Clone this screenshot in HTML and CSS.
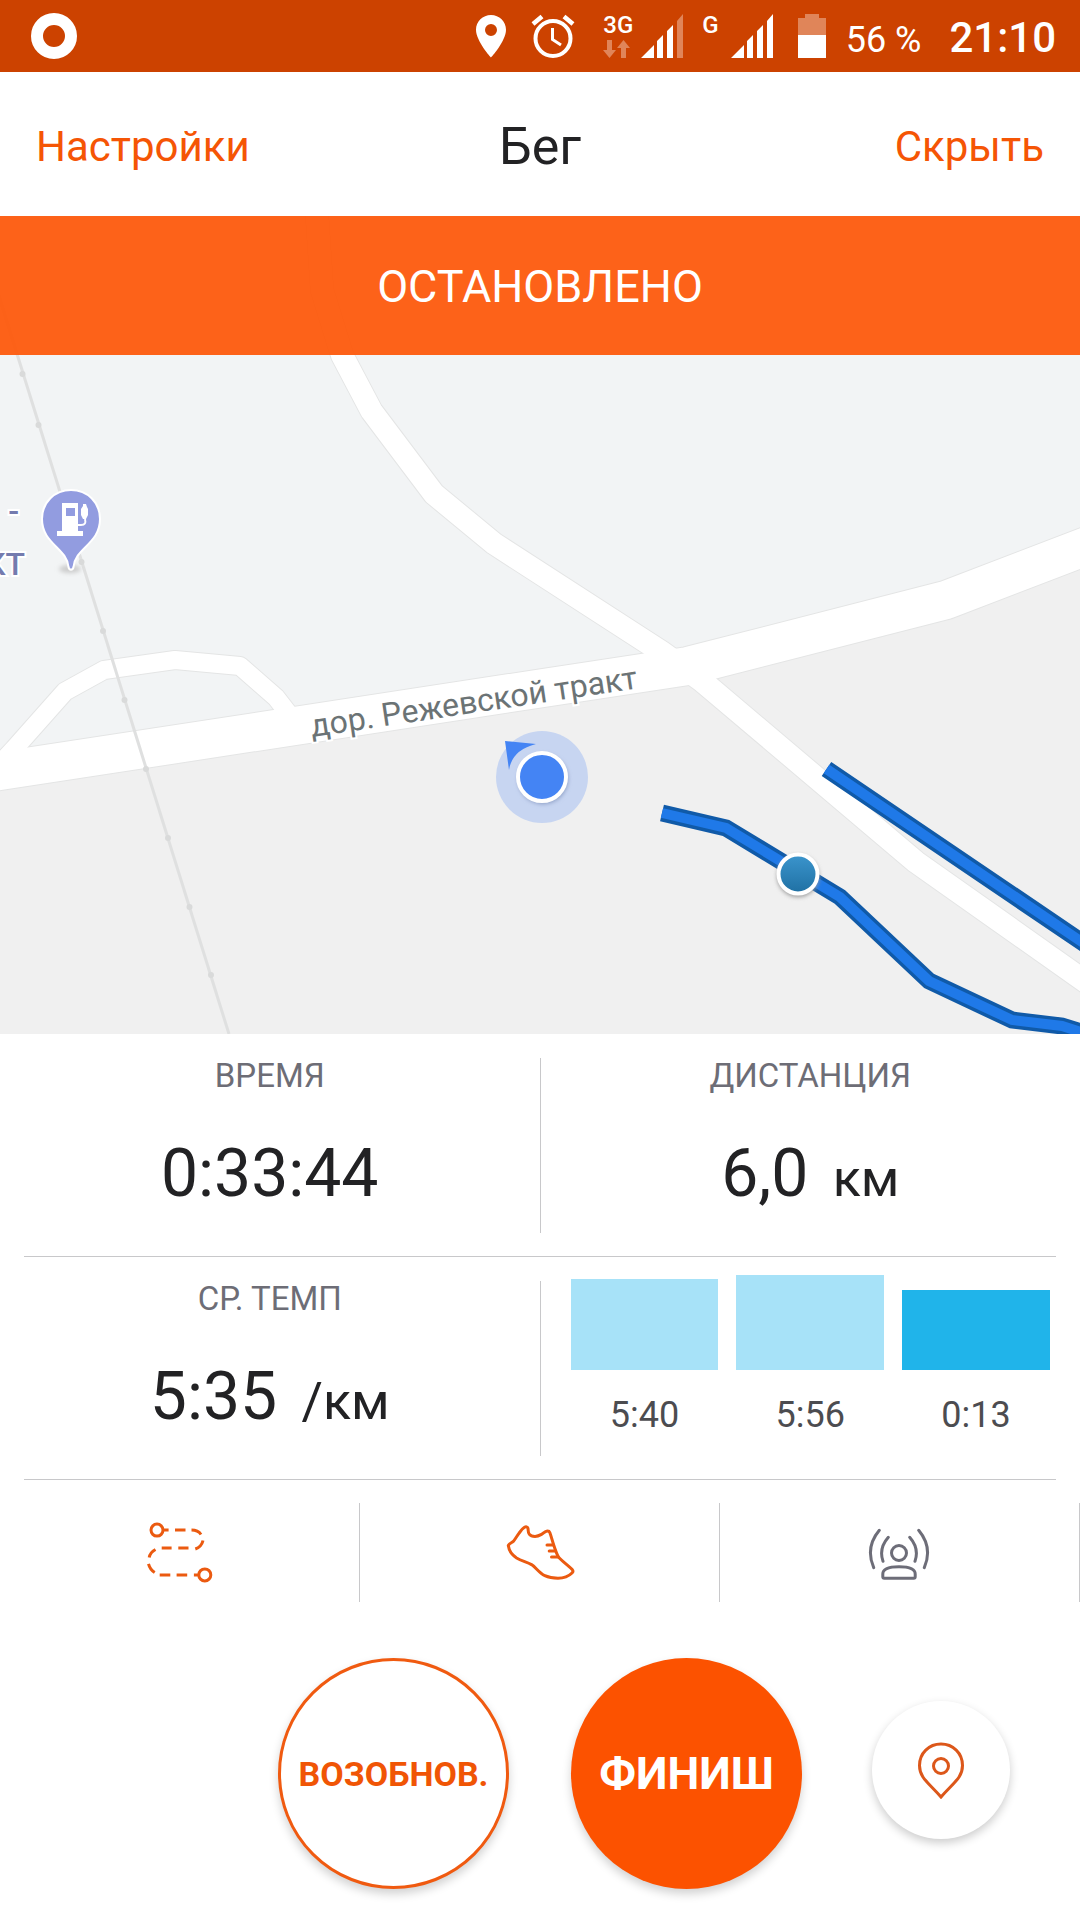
FILE: index.html
```
<!DOCTYPE html>
<html lang="ru">
<head>
    <meta charset="UTF-8">
    <meta name="viewport" content="width=device-width, initial-scale=1.0">
    <title>Бег</title>
    <link rel="stylesheet" href="styles.css">
</head>
<body>
    <div class="status-bar">
        <svg class="status-app" width="46" height="46" viewBox="0 0 46 46"><circle cx="23" cy="23" r="17" fill="none" stroke="#fff" stroke-width="12"/></svg>
        <svg width="32" height="44" viewBox="0 0 32 44"><path fill="#fff" fill-rule="evenodd" d="M16 1C7.700 1 1 7.500 1 15.700 1 27 16 43.500 16 43.500S31 27 31 15.700C31 7.500 24.300 1 16 1Zm0 9a6 6 0 1 1 0 12 6 6 0 0 1 0-12Z"/></svg>
        <svg width="44" height="44" viewBox="0 0 44 44" fill="none" stroke="#fff" stroke-width="4">
            <circle cx="22" cy="24.500" r="17.500"/>
            <path d="M2 10 11 2.500M42 10 33 2.500" stroke-width="4.500"/>
            <path d="M21.500 14V25.500L30 31" stroke-width="3"/>
        </svg>
        <div class="network">
            <div class="sim">
                <div class="sim-type">
                    <span>3G</span>
                    <svg width="28" height="18" viewBox="0 0 28 18" fill="#e08559"><path d="M4 0h5v10h4L6.500 18 0 10h4zM18 18h5V8h4L20.500 0 14 8h4z"/></svg>
                </div>
                <svg width="43" height="44" viewBox="0 0 43 44" fill="#fff">
                    <path d="M0 44 13 31V44zM16 44V27L22 21V44zM26 44V17L32 11V44z"/>
                    <path fill="#e08559" d="M36 44V7L42 0V44z"/>
                </svg>
            </div>
            <div class="sim">
                <div class="sim-type"><span>G</span></div>
                <svg width="43" height="44" viewBox="0 0 43 44" fill="#fff"><path d="M0 44 13 31V44zM16 44V27L22 21V44zM26 44V17L32 11V44zM36 44V7L42 0V44z"/></svg>
            </div>
        </div>
        <svg width="28" height="44" viewBox="0 0 28 44"><path fill="#e08559" d="M0 4h7V0h14v4h7v17H0z"/><path fill="#fff" d="M0 21h28v23H0z"/></svg>
        <div class="status-text">
            <span class="battery-level">56 %</span>
            <span class="clock">21:10</span>
        </div>
    </div>

    <header class="header">
        <a href="#" class="header-link">Настройки</a>
        <h1>Бег</h1>
        <a href="#" class="header-link right">Скрыть</a>
    </header>

    <section class="map">
        <svg class="map-canvas" viewBox="0 216 1080 818" preserveAspectRatio="xMidYMid slice">
            <defs>
                <linearGradient id="point" x1="0" y1="0" x2="0" y2="1">
                    <stop offset="0" stop-color="#3b95cd"/>
                    <stop offset="1" stop-color="#1f70a3"/>
                </linearGradient>
                <filter id="soft" x="-50%" y="-50%" width="200%" height="200%"><feGaussianBlur stdDeviation="2"/></filter>
                <path id="main" d="M-20 774 0 771 540 688.500 688 666 946 600 1100 541"/>
                <path id="cross" d="M316 200 322 290 342 355 371.500 411 434 494 494 543.500 661 651.500 702 681 916 862 1100 992"/>
                <path id="loop" d="M0 764 14 749 65 691.500 104 670 175 660 240 666 276 697.500 288 713"/>
                <path id="track" d="M662 813 726 828 840 897 929 981 1012 1020 1062 1026 1090 1035M826.500 769 1090 947.500"/>
            </defs>
            <path fill="#f2f4f5" d="M0 200H1080V1040H0z"/>
            <path fill="#f0f0f0" d="M0 771 540 688.500 688 666 946 600 1080 549V1040H0z"/>

            <!-- roads -->
            <g fill="none" stroke="#e4e5e5" stroke-linejoin="round">
                <use href="#main" stroke-width="40"/>
                <use href="#cross" stroke-width="24"/>
                <use href="#loop" stroke-width="20"/>
            </g>
            <g fill="none" stroke="#fff" stroke-linejoin="round">
                <use href="#main" stroke-width="38"/>
                <use href="#cross" stroke-width="22"/>
                <use href="#loop" stroke-width="18"/>
            </g>

            <!-- power line -->
            <path d="M-26 216 229 1034" fill="none" stroke="#dfe0e0" stroke-width="3"/>
            <g fill="#d9dada">
                <circle cx="22.500" cy="374" r="3"/><circle cx="38.500" cy="425" r="3"/><circle cx="81.500" cy="562" r="3"/>
                <circle cx="103" cy="631" r="3"/><circle cx="124.500" cy="700" r="3"/><circle cx="146" cy="769" r="3"/>
                <circle cx="168" cy="838" r="3"/><circle cx="189.500" cy="907" r="3"/><circle cx="211" cy="975" r="3"/>
            </g>

            <text class="street" transform="translate(312 737) rotate(-8.500)">дор. Режевской тракт</text>

            <!-- gas station -->
            <text class="poi" x="19" y="522">-</text>
            <text class="poi" x="25" y="575">КТ</text>
            <ellipse cx="70" cy="569" rx="11" ry="4" fill="#ccc" filter="url(#soft)"/>
            <path d="M71 490C54.500 490 42 502.500 42 519 42 544 67 548 68.500 567 69 570.500 73 570.500 73.500 567 75 548 100 544 100 519 100 502.500 87.500 490 71 490Z" fill="#929ce0" stroke="#fff" stroke-width="2"/>
            <path d="M62 503H78V531H83V536H57V531H62zM66 508V516H75V508z" fill="#fff" fill-rule="evenodd"/>
            <path d="M78 525H81C85 525 86 523 85 519" fill="none" stroke="#fff" stroke-width="2"/>
            <path d="M83 504h3l1 3 1 2v6l-2 4h-3l-2-4v-6l2-3z" fill="#fff"/>

            <!-- recorded track -->
            <use href="#track" fill="none" stroke="#105aa8" stroke-width="17"/>
            <use href="#track" fill="none" stroke="#1f79e8" stroke-width="10"/>
            <circle cx="798" cy="876" r="21" fill="#999" filter="url(#soft)"/>
            <circle cx="798" cy="874" r="19.500" fill="url(#point)" stroke="#fff" stroke-width="4"/>

            <!-- current position -->
            <circle cx="542" cy="777" r="46" fill="#c7d5f1"/>
            <path d="M505 741 536 744Q512 750 509 770z" fill="#4484f4"/>
            <circle cx="543" cy="779" r="25" fill="#8b9dc4" filter="url(#soft)"/>
            <circle cx="542" cy="777" r="24" fill="#4484f4" stroke="#fff" stroke-width="4"/>
        </svg>
        <div class="banner">ОСТАНОВЛЕНО</div>
    </section>

    <section class="stats">
        <div class="stat">
            <div class="stat-label">ВРЕМЯ</div>
            <div class="stat-value">0:33:44</div>
        </div>
        <div class="stat-separator"></div>
        <div class="stat">
            <div class="stat-label">ДИСТАНЦИЯ</div>
            <div class="stat-value">6,0 <span class="unit">км</span></div>
        </div>
    </section>
    <section class="stats">
        <div class="stat">
            <div class="stat-label">СР. ТЕМП</div>
            <div class="stat-value">5:35 <span class="unit">/км</span></div>
        </div>
        <div class="stat-separator"></div>
        <div class="splits">
            <div class="split">
                <div class="split-bar" style="height: 91px"></div>
                <span>5:40</span>
            </div>
            <div class="split">
                <div class="split-bar" style="height: 95px"></div>
                <span>5:56</span>
            </div>
            <div class="split current">
                <div class="split-bar" style="height: 80px"></div>
                <span>0:13</span>
            </div>
        </div>
    </section>

    <nav class="tools">
        <button class="tool" aria-label="Маршрут">
            <svg width="72" height="72" viewBox="0 0 72 72">
                <circle cx="13" cy="13.100" r="6"/>
                <circle cx="60.800" cy="57.900" r="6"/>
                <path d="M19 13.100H24.600M31 13.100H41.500M47.500 13.100Q54 13.100 57 17.500M59 23.500Q57.500 30 51.300 32M44.500 31H34.300M27.600 31H17.700M11.500 32.500Q6 35.500 5.200 40.500M4.500 46.800Q6 52.500 10.700 55.500M15.700 57.900H26.300M32.600 57.900H43.200M49.900 57.900H54.800"/>
            </svg>
        </button>
        <button class="tool" aria-label="Вид спорта">
            <svg width="72" height="72" viewBox="-2 0 72 72" stroke-linecap="round" stroke-linejoin="round">
                <path d="M2.300 28.500C3.500 26 5.500 26 7.300 24.400 9.500 22 11.500 18 13.200 16 15 13.500 16.500 11.500 18.500 10.300 20 9.500 21.500 9.800 21.900 11.100 22.400 13 21.900 15.500 23.200 17.100 24.500 18.800 27 19.400 29 19.400 31.500 19.400 33.500 18.500 35.500 17.400 37.500 16.300 38.500 14.500 40.400 14.200 42 13.900 43.300 14.200 43.800 15.500 45.300 19.500 46.200 23.500 47.700 28 49 32 50.500 36.500 52.400 40 56.500 44.500 62 48.500 66.300 52.600 67.300 53.800 67 55 66 56 62.500 59.500 57.500 61.200 52 61.200 47 61.200 43 60.600 38.800 58.600 33 55.800 30 50.500 25.500 47.600 21 45 15.500 44 10.600 41 6 38 3 34 2.300 28.500Z"/>
                <path d="M41 28H47.500M43.200 34H49.500M45.500 40H52.400"/>
            </svg>
        </button>
        <button class="tool muted" aria-label="Маячок">
            <svg width="72" height="72" viewBox="0 0 72 72" stroke-linecap="round" stroke-linejoin="round">
                <circle cx="35" cy="36" r="7.500"/>
                <path d="M20.300 61.200H49.700Q51.200 61.200 51.200 59.700V57C51.200 52 44 49.800 35 49.800S18.800 52 18.800 57V59.700Q18.800 61.200 20.300 61.200Z"/>
                <path d="M24.300 20.300Q14.500 31.500 19 44.300M45.700 20.300Q55.500 31.500 51 44.300M15.300 13.300Q1 30.500 9.700 50.700M54.700 13.300Q69 30.500 60.300 50.700"/>
            </svg>
        </button>
    </nav>

    <footer class="actions">
        <button class="round-btn resume">ВОЗОБНОВ.</button>
        <button class="round-btn finish">ФИНИШ</button>
        <button class="fab" aria-label="Моё местоположение">
            <svg width="48" height="58" viewBox="0 0 48 58" fill="none" stroke="#dc571a" stroke-width="3">
                <path d="M24 3C12 3 2.500 12 2.500 24.500 2.500 37 12 42 24 56 36 42 45.500 37 45.500 24.500 45.500 12 36 3 24 3Z"/>
                <circle cx="24" cy="25" r="7.500"/>
            </svg>
        </button>
    </footer>
</body>
</html>
```
FILE: styles.css
```
* {
    box-sizing: border-box;
}

body {
    margin: 0;
    min-height: 100vh;
    display: flex;
    flex-direction: column;
    font-family: Roboto, "Noto Sans", sans-serif;
    background: #fff;
    color: #222224;
}

svg {
    display: block;
    flex-shrink: 0;
}

button {
    font-family: inherit;
    padding: 0;
    border: none;
    background: none;
    cursor: pointer;
}

/* Status bar */
.status-bar {
    display: flex;
    align-items: center;
    gap: 24px;
    height: 72px;
    padding: 0 24px 0 31px;
    background: #cc4200;
    color: #fff;
}

.status-app {
    margin-right: auto;
}

.network {
    display: flex;
    gap: 18px;
    margin-left: 4px;
}

.sim {
    display: flex;
    gap: 8px;
}

.sim:last-child {
    gap: 12px;
}

.sim-type {
    display: flex;
    flex-direction: column;
    justify-content: space-between;
    font-size: 24px;
    font-weight: 500;
    line-height: 22px;
}

.status-text {
    display: flex;
    align-items: baseline;
    gap: 28px;
    margin-left: -4px;
    padding-top: 3px;
}

.battery-level {
    font-size: 36px;
}

.clock {
    font-size: 42px;
    font-weight: 500;
}

/* Header */
.header {
    display: grid;
    grid-template-columns: 1fr auto 1fr;
    align-items: center;
    height: 144px;
    padding: 4px 36px 0;
}

.header h1 {
    margin: 0;
    font-size: 52px;
    font-weight: 400;
}

.header-link {
    color: #f55505;
    font-size: 42px;
    text-decoration: none;
}

.header-link.right {
    text-align: right;
}

/* Map */
.map {
    position: relative;
    flex: 1;
    min-height: 400px;
    overflow: hidden;
}

.map-canvas {
    position: absolute;
    inset: 0;
    width: 100%;
    height: 100%;
}

.banner {
    position: relative;
    padding: 45px 0 42px;
    background: rgba(253, 90, 13, 0.95);
    color: #fff;
    font-size: 45px;
    line-height: 52px;
    text-align: center;
}

.street {
    font-size: 32px;
    fill: #6b7375;
    stroke: #fff;
    stroke-width: 4px;
    paint-order: stroke;
}

.poi {
    font-size: 32px;
    font-weight: 500;
    text-anchor: end;
    fill: #747bae;
    stroke: #fff;
    stroke-width: 4px;
    paint-order: stroke;
}

/* Stats */
.stats {
    display: grid;
    grid-template-columns: 1fr 1px 1fr;
    height: 223px;
    background: linear-gradient(#c8c8ca, #c8c8ca) center bottom / calc(100% - 48px) 1px no-repeat;
}

.stat {
    padding-top: 22px;
    text-align: center;
}

.stat-label {
    margin-bottom: 38px;
    color: #6d6d76;
    font-size: 33px;
    line-height: 40px;
}

.stat-value {
    font-size: 66px;
    line-height: 80px;
}

.unit {
    margin-left: 8px;
    font-size: 52px;
}

.stat-separator {
    margin: 24px 0;
    background: #c8c8ca;
}

.splits {
    display: flex;
    align-items: flex-end;
    gap: 18px;
    padding: 0 30px 45px;
}

.split {
    flex: 1;
    color: #4c4c50;
    font-size: 36px;
    line-height: 40px;
    text-align: center;
}

.split-bar {
    margin-bottom: 25px;
    background: #a7e2f8;
}

.split.current .split-bar {
    background: #20b4ea;
}

/* Tools */
.tools {
    display: grid;
    grid-template-columns: repeat(3, 1fr);
    padding: 23px 0 24px;
}

.tool {
    display: flex;
    align-items: center;
    justify-content: center;
    height: 99px;
    border-right: 1px solid #c8c8ca;
    color: #eb5a10;
}

.tool.muted {
    color: #6d6d78;
}

.tool svg {
    fill: none;
    stroke: currentColor;
    stroke-width: 3px;
}

/* Actions */
.actions {
    display: grid;
    grid-template-columns: 1fr auto auto 1fr;
    align-items: center;
    padding: 32px 0 31px;
}

.round-btn {
    width: 231px;
    height: 231px;
    border-radius: 50%;
    font-weight: 700;
    box-shadow: 0 5px 10px rgba(0, 0, 0, 0.18);
}

.resume {
    grid-column: 2;
    margin-right: 62px;
    border: 3px solid #f05a10;
    background: #fff;
    color: #f05505;
    font-size: 34px;
}

.finish {
    background: #fc5200;
    color: #fff;
    font-size: 45px;
}

.fab {
    display: flex;
    align-items: center;
    justify-content: center;
    justify-self: center;
    width: 138px;
    height: 138px;
    margin-bottom: 7px;
    border-radius: 50%;
    background: #fff;
    box-shadow: 0 4px 10px rgba(0, 0, 0, 0.2);
}
```
